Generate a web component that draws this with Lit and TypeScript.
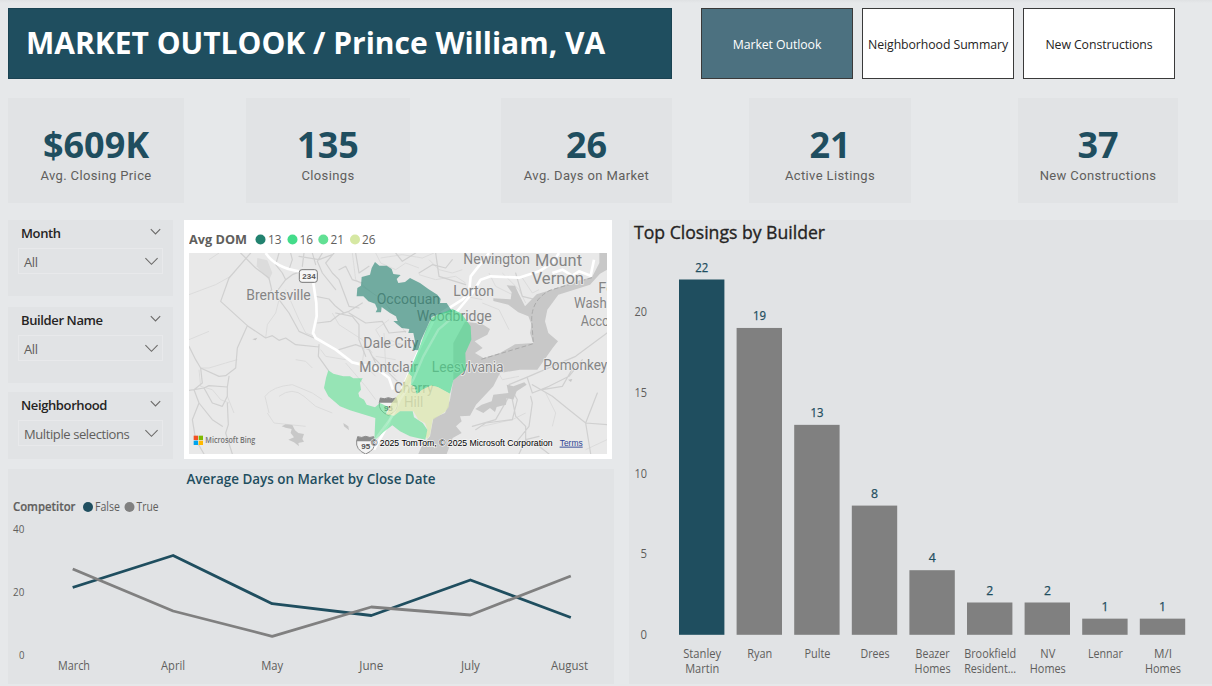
import { LitElement, html, svg, css } from "lit";
import { customElement } from "lit/decorators.js";

const t = (
  s: string, x: number, y: number, w: number, cls: string, anchor = "start"
) => svg`<text class=${cls} x=${x} y=${y} textLength=${w} lengthAdjust="spacingAndGlyphs" text-anchor=${anchor}>${s}</text>`;

@customElement("kpi-card")
class KpiCard extends LitElement {
  static properties = { value: {}, label: {} };
  declare value: string;
  declare label: string;
  static styles = css`
    :host { display: flex; flex-direction: column; align-items: center; background: #e1e3e5; height: 105px; box-sizing: border-box; padding-top: 25px; }
    .value { font: 700 36px/43px "Open Sans", sans-serif; color: #1f4e5f; letter-spacing: 0; }
    .label { font: 400 13px/20px Roboto, sans-serif; color: #605e5c; letter-spacing: 0.38px; white-space: nowrap; }
  `;
  render() {
    return html`<div class="value">${this.value}</div><div class="label">${this.label}</div>`;
  }
}

@customElement("slicer-box")
class SlicerBox extends LitElement {
  static properties = { name: {}, value: {} };
  declare name: string;
  declare value: string;
  static styles = css`
    :host { display: block; background: #e1e3e5; box-sizing: border-box; padding: 4px 10px 0 10px; font-family: "Open Sans", sans-serif; }
    .head { display: flex; justify-content: space-between; padding: 0 2px 0 3px; height: 24px; }
    .name { font-size: 13px; line-height: 18px; font-weight: 600; color: #252423; letter-spacing: -0.38px; }
    .head svg { margin-top: 4px; }
    .box { display: flex; align-items: center; justify-content: space-between; border: 1px solid #e8e9eb; height: 24px; padding: 0 4px 0 5px; }
    .val { font-size: 13px; color: #605e5c; letter-spacing: -0.4px; padding-top: 2px; }
    path { fill: none; stroke: #6b6a69; stroke-width: 1.1; }
  `;
  render() {
    return html`
      <div class="head"><span class="name">${this.name}</span>
        <svg width="11" height="8" viewBox="0 0 11 8"><path d="M.8 1.2 5.5 6 10.2 1.2" /></svg></div>
      <div class="box"><span class="val">${this.value}</span>
        <svg width="13" height="9" viewBox="0 0 13 9"><path d="M.4 1.2 6.5 7.3 12.6 1.2" /></svg></div>`;
  }
}

@customElement("area-map")
class AreaMap extends LitElement {
  static styles = css`
    :host { display: block; background: #fff; width: 428px; height: 239px; box-sizing: border-box; padding: 9px 5px 5px; }
    svg { display: block; }
    .lt { font: 700 13px "Open Sans", sans-serif; fill: #605e5c; }
    .ln { font: 400 13px "Open Sans", sans-serif; fill: #605e5c; }
    .map { background: #e9e9e9; }
    .place { font-family: Roboto, sans-serif; font-size: 44px; fill: #858585; stroke: #ececec; stroke-width: 5; paint-order: stroke; stroke-linejoin: round; }
    .big { font-family: Roboto, sans-serif; font-size: 48px; fill: #858585; stroke: #ececec; stroke-width: 5; paint-order: stroke; stroke-linejoin: round; }
    .shield { font: 700 24px "Liberation Sans", sans-serif; fill: #555; }
    .copy { font: 400 28px "Liberation Sans", sans-serif; fill: #000; stroke: #f4f4f4; stroke-width: 4; paint-order: stroke; }
    .terms { font: 400 28px "Liberation Sans", sans-serif; fill: #2c4494; text-decoration: underline; }
    .bing { font: 600 24px "Open Sans", sans-serif; fill: #737373; }
    .water { fill: #c8c8c8; }
    .road { fill: none; stroke: #d0d0d0; stroke-width: 3.6; stroke-linejoin: round; stroke-linecap: round; }
    .lane { fill: none; stroke: #dadada; stroke-width: 2.8; stroke-linejoin: round; }
    .hwy { fill: none; stroke: #fff; stroke-width: 8; stroke-linejoin: round; }
    .dash { fill: none; stroke: #aaa; stroke-width: 3; stroke-dasharray: 14 7; }
  `;
  interstate(x: number, y: number) {
    return svg`<g transform="translate(${x} ${y})">
      <path d="M3 1Q15 6 27 0Q40 6 51 1L54 14Q58 40 27 53Q-4 40 0 14Z" fill="#f4f4f4" stroke="#8b8b8b" stroke-width="3"/>
      <path d="M3 1Q15 6 27 0Q40 6 51 1L54 15H0Z" fill="#8b8b8b"/>
      <text class="shield" x="27" y="39" text-anchor="middle">95</text></g>`;
  }
  render() {
    return html`
      <svg width="418" height="24" viewBox="189 229 418 24">
        ${t("Avg DOM", 189, 244, 58, "lt")}
        <circle cx="260.5" cy="239.5" r="5" fill="#22826f" /><circle cx="292.5" cy="239.5" r="5" fill="#43dc8a" />
        <circle cx="323.3" cy="239.5" r="5" fill="#62e094" /><circle cx="355" cy="239.5" r="5" fill="#d6e8a3" />
        ${t("13", 268, 244, 13.5, "ln")}${t("16", 299.5, 244, 13.5, "ln")}${t("21", 330.5, 244, 13.5, "ln")}${t("26", 362, 244, 13.5, "ln")}
      </svg>
      <svg class="map" width="418" height="201" viewBox="0 0 1254 603">
        <path fill="#dcdcdc" d="M205 15 235 22 250 60 240 80 215 55 203 40Z" />
        <g class="lane">
          <path d="M0 125 80 95 125 70M290 110 330 200 350 240 375 250M230 255 235 215 260 180 270 140 300 120M145 320 110 330 60 345 35 345M0 260 60 235M240 480 228 430Q250 400 310 395L370 420 400 440M235 480 255 510 350 520M270 430Q310 400 345 430L380 460 430 480M30 350 35 400 70 410 95 440 120 450M60 20 90 0M320 320 350 325 370 345M395 290 410 310 470 320M115 430 135 480"/>
          <path d="M430 180 450 215 520 260 550 300M470 330 530 400 560 440M530 250 520 330 560 370M540 275 600 260 650 280M560 310 620 320M585 240 590 340 620 370M490 0 500 80 550 120M880 150 930 170 960 230M940 60 990 110 1010 150"/>
          <path d="M560 0 575 30 620 50 650 30 690 45M575 15 640 5 700 15 735 0M520 100 580 140 620 190 650 240M600 200 560 230 590 280 650 270M690 65 740 80 800 70 830 90M720 20 750 50 790 60 820 50M830 130 880 140M900 60 920 100 980 130M1000 75 1030 120 1050 110M900 310 940 380 990 370M1070 420 1100 480 1090 520M1190 590 1254 560M880 520 970 500 1010 480"/>
        </g>
        <g class="road">
          <path d="M185 0 120 75 95 145 175 218 230 255 250 248 270 262 290 255 320 275 390 282M175 218 145 285 140 345 110 368 90 370 35 345M0 280 20 320 35 345 40 390 15 410 0 412M15 410 45 405 60 398 115 402 120 370M15 410 30 450 10 500 20 560 45 603M45 405 70 450 100 460 115 430 115 402M115 450 118 515 110 540 130 603M30 450 70 500 100 520M155 0 200 45 240 75 248 110 230 140M270 140 260 120 290 80 310 65 350 50M270 140 300 180 330 235 375 255M390 275 388 310 418 352"/>
          <path d="M380 130 420 138 440 160 465 180M385 210 425 205 450 185 480 175 520 150M270 0 260 35 280 60 290 80M305 0 310 20 300 50M345 0 340 40M370 0 380 35M400 0 385 25 400 60 440 110M435 0 410 30 430 60 450 80 480 160 510 165M450 50 470 40 490 80 520 90M330 10 390 20 430 5M480 180 530 210 580 205 600 240 650 235M500 0 510 60 540 40M450 290 500 275 540 290 560 330M550 310 590 350 630 390M440 180 490 190 510 215 510 260 530 310M620 0 640 25 680 0M690 60 730 35 770 45 790 20M740 0 750 70 830 95M840 10 900 30 940 20M980 60 1000 130 1040 140"/>
          <path d="M1254 240 1160 310 1020 370 960 395M1015 375 1030 420 1080 400 1140 370 1180 320M1030 395 1090 430 1140 470 1190 510 1254 515M1190 510 1205 603M960 395 985 440 970 500 890 510 860 530M850 520 920 500 960 430M970 440 980 490 1010 520 1010 560 1050 550M1240 350 1254 330M1225 420 1190 510M1025 430 1030 450 1020 520 980 570M1010 560 1050 580 1080 603M1010 560 990 603M1060 410 1120 400 1160 330"/>
        </g>
        <path class="water" d="M278 520 290 514 310 516 318 532 328 540 345 543 340 558 345 566 328 570 330 580 315 568 298 560 315 553 305 540 308 528 290 524ZM190 259 205 254 200 262ZM1137 380 1150 378 1146 387ZM463 510 478 520 480 532 465 520Z" />
        <g transform="translate(483 0)">
          <path class="water" d="M748 0 748 30 726 73 680 84 600 112 560 124 525 160 505 120 495 98 470 97 485 118 482 139 430 136 430 144 475 155 505 178 535 190 545 215 540 240 550 270 495 274 450 300 400 315 375 300 398 285 374 265 412 245 420 228 395 212 345 206 310 270 310 380 300 440 285 480 250 495 240 550 215 580 205 603 290 603 308 555 335 540 318 520 335 505 330 490 360 488 378 455 430 400 450 360 510 350 562 350 608 285 624 265 595 240 585 205 592 170 625 125 720 95 750 62 771 50V0ZM376 468 400 480 420 465 435 477 440 462 468 455 470 435 490 440 500 415 530 395 523 388 490 400 470 395 475 420 430 425 425 445 395 455Z" />
          <path class="dash" d="M726 74 600 112Q545 140 545 200L550 272 390 320"/>
        </g>
        <g class="hwy">
          <path d="M230 0Q260 45 330 55M373 90 382 150 383 190 372 240 380 255 440 290 490 328 560 345 600 375 612 410"/>
          <path d="M555 590 600 510 630 430 690 290 740 190 820 140 840 120 845 70 900 0M800 180 850 120 875 80 905 70 990 74 1050 55 1090 30 1110 0M1090 60 1120 50 1150 68 1170 55 1205 68 1215 20"/>
        </g>
        <g transform="translate(483 0)">
          ${t("Newington", 340, 34, 200, "place")}${t("Mount", 555, 39, 141, "big")}${t("Vernon", 545, 93, 157, "big")}
          ${t("Lorton", 310, 130, 122, "place")}<text class="place" x="745" y="120">Fo</text>
          ${t("Wash", 672, 164, 98, "place")}<text class="place" x="692" y="219" textLength="86" lengthAdjust="spacingAndGlyphs">Acco</text>
          ${t("Occoquan", 80, 153, 190, "place")}${t("Woodbridge", 200, 205, 225, "place")}
          ${t("Dale City", 40, 284, 165, "place")}${t("Montclair", 28, 356, 176, "place")}
          ${t("Leesylvania", 245, 356, 216, "place")}${t("Cherry", 132, 419, 118, "place")}
          ${t("Hill", 162, 463, 58, "place")}${t("Pomonkey", 580, 350, 192, "place")}
          ${this.interstate(88, 434)}
        </g>
        ${t("Brentsville", 172, 141, 193, "place")}
        <rect x="331" y="50" width="54" height="38" rx="8" fill="#f7f7f7" stroke="#777" stroke-width="3" />
        ${t("234", 340, 78, 40, "shield")}
        ${this.interstate(503, 550)}
        <g transform="translate(483 0)">
          <path fill="#22826f" fill-opacity=".6" d="M75 27 88 38 110 38 125 48 130 63 152 66 140 78 145 90 165 87 180 75 210 90 235 108 262 125 272 138 270 150 290 150 302 168 308 176 262 185 245 192 230 225 213 262 205 292 188 290 195 265 190 240 175 240 178 228 155 225 130 204 143 204 138 190 120 180 95 162 93 178 77 178 82 168 75 152 55 145 40 130 20 130 22 105 33 98 35 72 60 65 65 45Z"/>
          <path fill="#43dc8a" fill-opacity=".62" d="M262 185 308 168 335 182 362 220 364 260 346 300 348 350 310 382 300 422 262 402 242 398 215 412 200 424 192 400 182 395 185 370 175 362 205 292 230 225 245 195Z"/>
          <path fill="#dfe9b4" fill-opacity=".78" d="M175 360 185 370 183 395 194 402 200 424 220 408 245 397 265 403 300 422 296 462 285 477 248 500 240 545 232 558 226 550 232 530 225 510 205 500 190 475 150 475 132 488 108 486 125 450 150 418Z"/>
          <path fill="#62e094" fill-opacity=".62" d="M-65 352 -50 362 -20 370 0 370 10 376 38 376 30 390 33 410 25 420 28 432 42 440 50 455 75 463 90 450 115 462 108 484 132 488 150 475 188 475 192 493 218 510 232 530 226 560 180 550 150 535 127 517 100 538 73 563 76 495 0 472 -30 460 -65 430 -78 405 -72 375Z"/>
          <path fill="none" stroke="#fff" stroke-opacity=".22" stroke-width="7" d="M300 200 265 230 220 310 190 380 150 440 130 485 75 560"/>
        </g>
        <path fill="#f25022" d="M14 548h13v13H14z" /><path fill="#7fba00" d="M29 548h13v13H29z" />
        <path fill="#00a4ef" d="M14 563h13v13H14z" /><path fill="#ffb900" d="M29 563h13v13H29z" />
        ${t("Microsoft Bing", 49, 571, 150, "bing")}
        ${t("© 2025 TomTom, © 2025 Microsoft Corporation", 546, 578, 545, "copy")}
        ${t("Terms", 1112, 578, 69, "terms")}
      </svg>`;
  }
}

@customElement("line-panel")
class LinePanel extends LitElement {
  static styles = css`
    :host { display: block; background: #e1e3e5; height: 215px; }
    svg { display: block; font-family: "Open Sans", sans-serif; }
    .title { font-size: 13.6px; font-weight: 600; fill: #1f4e5f; }
    .lt { font-size: 12.3px; font-weight: 600; fill: #605e5c; stroke: #605e5c; stroke-width: .2; }
    .ln { font-size: 12.3px; fill: #605e5c; }
    .tick { font-size: 10px; fill: #605e5c; }
    .month { font-size: 12px; fill: #605e5c; }
    polyline { fill: none; stroke-width: 2.8; stroke-linejoin: round; stroke-linecap: square; }
  `;
  months: [string, number][] = [["March", 32], ["April", 24], ["May", 22], ["June", 24], ["July", 19], ["August", 37]];
  line(v: number[], c: string) {
    return svg`<polyline stroke=${c} points=${v.map((y, i) => `${74 + i * 99.1},${y}`).join(" ")} />`;
  }
  render() {
    return html`<svg width="606" height="215" viewBox="8 469 606 215">
      ${t("Average Days on Market by Close Date", 186.5, 484, 249, "title")}
      ${t("Competitor", 13, 511, 62.5, "lt")}
      <circle cx="88" cy="507" r="5" fill="#1f4e5f" />${t("False", 95, 511, 25, "ln")}
      <circle cx="129.5" cy="507" r="5" fill="#808080" />${t("True", 136.5, 511, 22, "ln")}
      ${t("40", 13, 533, 11.3, "tick")}${t("20", 13, 596, 11.3, "tick")}${t("0", 19, 659, 5.5, "tick")}
      ${this.line([587, 555.5, 603.7, 615.5, 580, 617], "#1f4e5f")}
      ${this.line([569.5, 611, 636.3, 607, 615, 576.5], "#808080")}
      ${this.months.map(([m, w], i) => t(m, 74 + i * 99.1, 670, w, "month", "middle"))}
    </svg>`;
  }
}

@customElement("bar-panel")
class BarPanel extends LitElement {
  static styles = css`
    :host { display: block; background: #e1e3e5; height: 464px; }
    svg { display: block; font-family: "Open Sans", sans-serif; }
    .title { font-size: 17.6px; fill: #252423; stroke: #252423; stroke-width: .35; }
    .val { font-size: 12px; fill: #1f4e5f; stroke: #1f4e5f; stroke-width: .25; }
    .tick { font-size: 12px; fill: #605e5c; }
    .cat { font-size: 12px; fill: #605e5c; }
  `;
  bars: [number, [string, number][]][] = [
    [22, [["Stanley", 38], ["Martin", 34]]], [19, [["Ryan", 25]]], [13, [["Pulte", 26]]], [8, [["Drees", 29]]],
    [4, [["Beazer", 34], ["Homes", 36]]], [2, [["Brookfield", 52], ["Resident...", 52]]],
    [2, [["NV", 15], ["Homes", 36]]], [1, [["Lennar", 35]]], [1, [["M/I", 18], ["Homes", 36]]],
  ];
  render() {
    return html`<svg width="583" height="464" viewBox="629 220 583 464">
      ${t("Top Closings by Builder", 634, 239, 191, "title")}
      ${[0, 5, 10, 15, 20].map((n) => t(String(n), n > 9 ? 634.5 : 640.5, 639 - n * 16.15, n > 9 ? 12.5 : 6.5, "tick"))}
      ${this.bars.map(([n, names], i) => {
        const x = 679 + i * 57.6, h = n * 16.15;
        return svg`<rect x=${x} y=${634.8 - h} width="45.4" height=${h} fill=${i ? "#808080" : "#1f4e5f"} />
          ${t(String(n), x + 22.8, 627 - h, n > 9 ? 13 : 7, "val", "middle")}
          ${names.map(([s, w], k) => t(s, x + 23.2, 658 + k * 15, w, "cat", "middle"))}`;
      })}
    </svg>`;
  }
}

@customElement("app-root")
class AppRoot extends LitElement {
  static styles = css`
    :host { display: block; width: 1212px; height: 686px; overflow: hidden; box-sizing: border-box; padding: 8px 0 0 8px; background: linear-gradient(#dfe1e3, #e6e8ea 3px); font-family: "Open Sans", sans-serif; }
    .top { display: flex; height: 71px; }
    .title { width: 664px; box-sizing: border-box; border: 1px solid #1a4252; background: #1f4e5f; color: #fff; font-size: 30px; font-weight: 700; line-height: 68px; padding-left: 17px; white-space: nowrap; letter-spacing: 0; }
    .nav { display: flex; gap: 9px; margin-left: 29px; }
    .btn { width: 152px; box-sizing: border-box; border: 1px solid #3a3a3a; background: #fff; color: #252423; font-size: 12.3px; display: flex; align-items: center; justify-content: center; white-space: nowrap; letter-spacing: -0.08px; padding-top: 2px; }
    .on { background: #4c7180; color: #fff; }
    .kpis { display: grid; grid-template-columns: 176px 62px 164px 91px 171px 77px 162px 107px 160px; margin-top: 19px; }
    .kpis kpi-card:nth-child(2) { grid-column: 3; }
    .kpis kpi-card:nth-child(3) { grid-column: 5; }
    .kpis kpi-card:nth-child(4) { grid-column: 7; }
    .kpis kpi-card:nth-child(5) { grid-column: 9; }
    .main { display: grid; grid-template-columns: 606px 583px; column-gap: 15px; margin-top: 17px; }
    .upper { display: flex; gap: 11px; margin-bottom: 10px; }
    .slicers { display: grid; grid-template-rows: 76px 11px 76px 9px 67px; width: 165px; }
    .slicers slicer-box:nth-child(2) { grid-row: 3; }
    .slicers slicer-box:nth-child(3) { grid-row: 5; }
  `;
  render() {
    return html`
      <div class="top">
        <div class="title">MARKET OUTLOOK / Prince William, VA</div>
        <div class="nav"><div class="btn on">Market Outlook</div><div class="btn">Neighborhood Summary</div><div class="btn">New Constructions</div></div>
      </div>
      <div class="kpis">
        <kpi-card value="$609K" label="Avg. Closing Price"></kpi-card>
        <kpi-card value="135" label="Closings"></kpi-card>
        <kpi-card value="26" label="Avg. Days on Market"></kpi-card>
        <kpi-card value="21" label="Active Listings"></kpi-card>
        <kpi-card value="37" label="New Constructions"></kpi-card>
      </div>
      <div class="main">
        <div>
          <div class="upper">
            <div class="slicers">
              <slicer-box name="Month" value="All"></slicer-box>
              <slicer-box name="Builder Name" value="All"></slicer-box>
              <slicer-box name="Neighborhood" value="Multiple selections"></slicer-box>
            </div>
            <area-map></area-map>
          </div>
          <line-panel></line-panel>
        </div>
        <bar-panel></bar-panel>
      </div>`;
  }
}
